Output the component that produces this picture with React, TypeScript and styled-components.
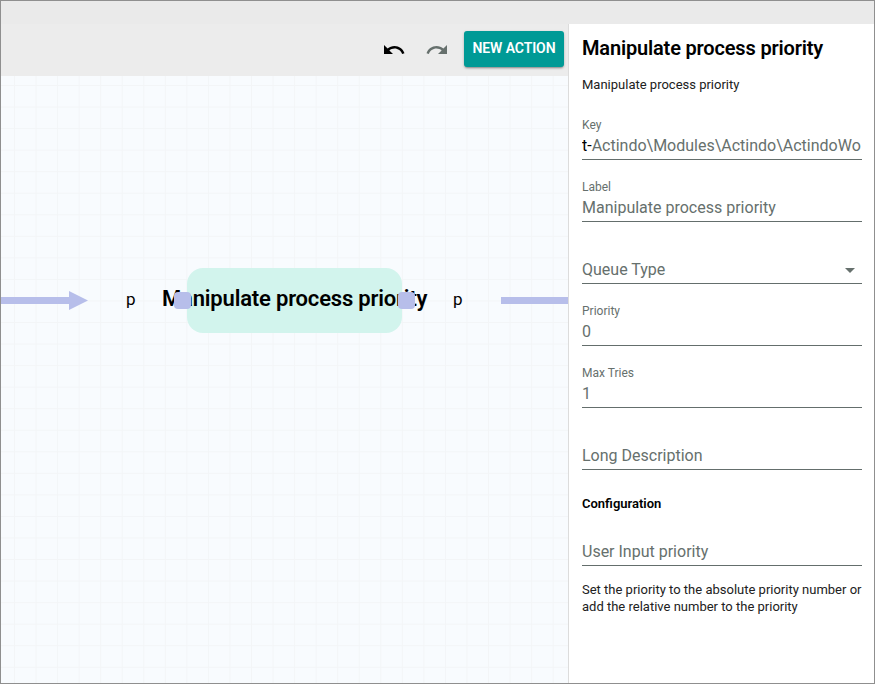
import React from "react";
import styled, { createGlobalStyle } from "styled-components";

const GlobalStyle = createGlobalStyle`
  * { box-sizing: border-box; }
  body { margin: 0; font-family: Roboto, "Liberation Sans", sans-serif; color: #000; background: #fff; }
`;

const Window = styled.div`
  width: 875px;
  height: 684px;
  border: 1px solid #8f8f8f;
  display: flex;
  flex-direction: column;
  overflow: hidden;
`;

const TopBar = styled.header`
  flex: 0 0 23px;
  background: #eaeaea;
`;

const Workspace = styled.main`
  flex: 1;
  min-height: 0;
  display: flex;
`;

const Editor = styled.section`
  flex: 0 0 567px;
  display: flex;
  flex-direction: column;
`;

const Toolbar = styled.div`
  flex: 0 0 52px;
  padding: 7px 4px 0 0;
  display: flex;
  align-items: flex-start;
  justify-content: flex-end;
  background: #ececec;
`;

const IconButton = styled.button<{ $muted?: boolean; $gap: number }>`
  width: 24px;
  height: 24px;
  padding: 0;
  margin: 7px ${(p) => p.$gap}px 0 0;
  border: 0;
  background: none;
  color: ${(p) => (p.$muted ? "#66706d" : "#000")};

  svg { display: block; fill: currentColor; }
`;

const ActionButton = styled.button`
  width: 100px;
  height: 36px;
  padding: 0 0 1px;
  border: 0;
  border-radius: 3px;
  background: #009a96;
  color: #fff;
  font: 600 14px/35px Roboto, sans-serif;
  letter-spacing: -0.1px;
  white-space: nowrap;
  box-shadow: 0 2px 2px -1px rgba(0, 0, 0, 0.3), 0 1px 3px rgba(0, 0, 0, 0.2);
`;

const Canvas = styled.div`
  flex: 1;
  position: relative;
  overflow: hidden;
  background-color: #f8fbfe;
  background-image: linear-gradient(to right, #f3f5f7 1px, transparent 1px),
    linear-gradient(to bottom, #f3f5f7 1px, transparent 1px);
  background-size: 21.56px 21.56px;
  background-position: 13px 9px;
`;

const Node = styled.div`
  position: absolute;
  left: 186px;
  top: 192px;
  width: 215px;
  height: 65px;
  border-radius: 16px;
  background: #d2f4ed;
`;

const NodeTitle = styled.div`
  position: absolute;
  left: 161px;
  top: 209px;
  font-size: 22px;
  line-height: 28px;
  font-weight: 600;
  letter-spacing: -0.18px;
  white-space: nowrap;
`;

const Port = styled.div<{ $x: number }>`
  position: absolute;
  left: ${(p) => p.$x}px;
  top: 216px;
  width: 17px;
  height: 17px;
  border-radius: 4px;
  background: #b7beea;
`;

const PortLabel = styled.div<{ $x: number }>`
  position: absolute;
  left: ${(p) => p.$x}px;
  top: 213px;
  font-size: 17px;
  line-height: 20px;
`;

const Edges = styled.svg`
  position: absolute;
  inset: 0;
  fill: #b7beea;
`;

const Panel = styled.aside`
  flex: 1;
  min-width: 0;
  padding: 0 12px 0 13px;
  border-left: 1px solid #dcdcdc;
  background: #fff;
`;

const PanelTitle = styled.h1`
  margin: 0;
  padding-top: 12px;
  font-size: 20px;
  line-height: 24px;
  font-weight: 600;
  letter-spacing: -0.17px;
  white-space: nowrap;
`;

const Note = styled.p<{ $top: number }>`
  margin: ${(p) => p.$top}px 0 0;
  font-size: 13px;
  line-height: 17px;
  color: #212121;
`;

const Fields = styled.div<{ $top: number }>`
  margin-top: ${(p) => p.$top}px;
`;

const Field = styled.div`
  height: 62px;
  display: flex;
  flex-direction: column;
  justify-content: flex-end;
  border-bottom: 1px solid #646e6c;
  color: #66706d;
`;

const FieldLabel = styled.span`
  font-size: 12px;
  line-height: 14px;
  margin-bottom: 4px;
`;

const FieldValue = styled.div`
  display: flex;
  justify-content: space-between;
  align-items: center;
  overflow: hidden;
  height: 20px;
  margin-bottom: 3px;
  font-size: 16px;
  line-height: 20px;
  white-space: nowrap;
`;

const Prefix = styled.span`
  color: #000;
`;

const Caret = styled.span`
  margin: 1px 7px 0 0;
  border: 5px solid transparent;
  border-top-color: currentColor;
  border-bottom: 0;
`;

const SectionTitle = styled.h2`
  margin: 25px 0 0;
  font-size: 13px;
  line-height: 18px;
  font-weight: 600;
`;

type FieldRowProps = { label?: string; select?: boolean; children: React.ReactNode };

function FieldRow({ label, select, children }: FieldRowProps) {
  return (
    <Field>
      {label && <FieldLabel>{label}</FieldLabel>}
      <FieldValue>
        <span>{children}</span>
        {select && <Caret />}
      </FieldValue>
    </Field>
  );
}

export default function App() {
  return (
    <>
      <GlobalStyle />
      <Window>
        <TopBar />
        <Workspace>
          <Editor>
            <Toolbar>
              <IconButton $gap={19} aria-label="Undo">
                <svg width="24" height="24" viewBox="0 0 24 24">
                  <path d="M12.5 8c-2.65 0-5.05.99-6.9 2.6L2 7v9h9l-3.62-3.62c1.39-1.16 3.16-1.88 5.12-1.88 3.54 0 6.55 2.31 7.6 5.5l2.37-.78C21.08 11.03 17.15 8 12.5 8z" />
                </svg>
              </IconButton>
              <IconButton $gap={15} $muted aria-label="Redo">
                <svg width="24" height="24" viewBox="0 0 24 24">
                  <path d="M18.4 10.6C16.55 8.99 14.15 8 11.5 8c-4.65 0-8.58 3.03-9.96 7.22L3.9 16c1.05-3.19 4.05-5.5 7.6-5.5 1.95 0 3.73.72 5.12 1.88L13 16h9V7l-3.6 3.6z" />
                </svg>
              </IconButton>
              <ActionButton>NEW ACTION</ActionButton>
            </Toolbar>
            <Canvas>
              <Edges width="567" height="607">
                <path d="M0 221h68v-6l19 9.500-19 9.500v-6H0z" />
                <path d="M500 221h67v7h-67z" />
              </Edges>
              <Node />
              <NodeTitle>Manipulate process priority</NodeTitle>
              <PortLabel $x={125}>p</PortLabel>
              <Port $x={173} />
              <Port $x={397} />
              <PortLabel $x={452}>p</PortLabel>
            </Canvas>
          </Editor>
          <Panel>
            <PanelTitle>Manipulate process priority</PanelTitle>
            <Note $top={16}>Manipulate process priority</Note>
            <Fields $top={5}>
              <FieldRow label="Key">
                <Prefix>t-</Prefix>Actindo\Modules\Actindo\ActindoWo
              </FieldRow>
              <FieldRow label="Label">Manipulate process priority</FieldRow>
              <FieldRow select>Queue Type</FieldRow>
              <FieldRow label="Priority">0</FieldRow>
              <FieldRow label="Max Tries">1</FieldRow>
              <FieldRow>Long Description</FieldRow>
            </Fields>
            <SectionTitle>Configuration</SectionTitle>
            <Fields $top={-9}>
              <FieldRow>User Input priority</FieldRow>
            </Fields>
            <Note $top={15}>
              Set the priority to the absolute priority number or add the relative number to the priority
            </Note>
          </Panel>
        </Workspace>
      </Window>
    </>
  );
}
